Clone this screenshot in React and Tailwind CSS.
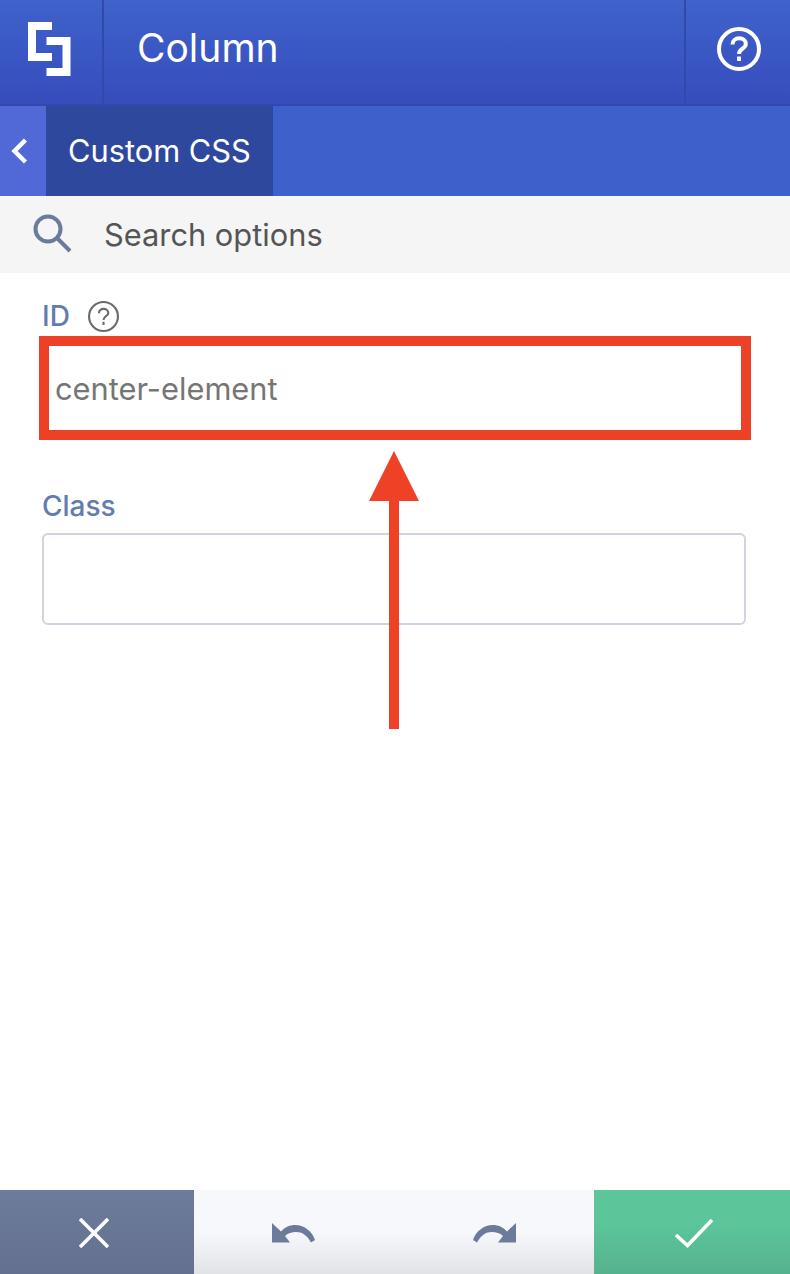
function Logo() {
  return (
    <svg width="44" height="56" viewBox="0 0 44 56" fill="#fff">
      <path d="M0 0H24V8H8V31H24V39H0Z" />
      <path d="M42.5 15V54H18.5V46H34.5V23H18.5V15Z" />
    </svg>
  );
}

function HelpIcon({ size, stroke, color }) {
  return (
    <svg width={size} height={size} viewBox="0 0 44 44" fill="none" stroke={color} strokeWidth={stroke}>
      <circle cx="22" cy="22" r={22 - stroke / 2} />
      <path d="M15.5 17.5c0-3.8 3-6.3 6.7-6.3s6.6 2.4 6.6 5.7c0 4.8-6.8 4.6-6.8 10" />
      <path d="M22 29.5v4.5" />
    </svg>
  );
}

function Undo({ flip }) {
  return (
    <svg width="43" height="20" viewBox="0 0 43 20" fill="#6c7a9c" className={flip ? "-scale-x-100" : ""}>
      <path d="M0 0L9 8.5C13 4 18 2 23 2C32 2 40 8 43 17L39 19.5C35 12 30 9 24 9C20 9 16 10 13 13L18 19.5H0Z" />
    </svg>
  );
}

export default function App() {
  return (
    <div className="relative flex h-[1274px] w-[790px] flex-col overflow-hidden bg-white font-['Inter',sans-serif]">
      <header className="flex h-[106px] shrink-0 border-b-2 border-[#2f49ad] bg-gradient-to-b from-[#3f62cb] to-[#364dbb]">
        <div className="flex w-[104px] items-center justify-start border-r-2 border-[#2f49ad] pl-[28px]">
          <div className="mb-[4px]">
            <Logo />
          </div>
        </div>
        <h1 className="mb-[8px] flex flex-1 items-center pl-[33px] text-[39px] font-normal text-white">Column</h1>
        <div className="flex w-[106px] items-center justify-center border-l-2 border-[#2f49ad] pb-[6px] pl-[2px]">
          <HelpIcon size={44} stroke={4} color="#fff" />
        </div>
      </header>

      <nav className="flex h-[90px] shrink-0 bg-[#3e60ca]">
        <div className="flex w-[46px] items-center justify-start bg-[#5069d6] pl-[11px]">
          <svg width="17" height="26" viewBox="0 0 17 26" fill="none" stroke="#fff" strokeWidth="4.5">
            <path d="M14.5 2L3.5 13L14.5 24" />
          </svg>
        </div>
        <div className="flex w-[227px] items-center bg-[#2e489e] pl-[22px] text-[30.8px] text-white">Custom CSS</div>
      </nav>

      <div className="flex h-[77px] shrink-0 items-center bg-[#f5f5f5] pl-[33px] text-[#555555]">
        <svg width="39" height="39" viewBox="0 0 39 39" fill="none" stroke="#6c7a9c" strokeWidth="4" className="mb-[2px]">
          <circle cx="15" cy="15" r="12.5" />
          <path d="M24 24L37 37" />
        </svg>
        <span className="ml-[32px] pt-[2px] text-[30.8px]">Search options</span>
      </div>

      <main className="flex-1 pl-[42px] pr-[44px]">
        <div className="mt-[24px] flex h-[38px] items-center">
          <span className="text-[28px] font-medium leading-none text-[#627cb0]">ID</span>
          <span className="ml-[18px]">
            <HelpIcon size={31} stroke={3} color="#6b6b6b" />
          </span>
        </div>
        <div className="-ml-[3px] -mr-[5px] mt-[1px] flex h-[104px] items-center border-[10px] border-[#ec4027] pl-[6px] pt-[3px] text-[30.8px] text-[#757575]">
          center-element
        </div>
        <div className="mt-[46px] text-[28px] font-medium leading-[40px] text-[#627cb0]">Class</div>
        <div className="mt-[7px] h-[92px] rounded-[6px] border-2 border-[#d2d2e0] bg-white" />
      </main>

      <footer className="flex h-[84px] shrink-0">
        <div className="flex w-[194px] items-center justify-center bg-gradient-to-b from-[#6e7c9b] to-[#63708f] pr-[6px] pt-[2px]">
          <svg width="30" height="30" viewBox="0 0 30 30" fill="none" stroke="#fff" strokeWidth="3.6">
            <path d="M1 1L29 29M29 1L1 29" />
          </svg>
        </div>
        <div className="flex flex-1 items-center justify-between bg-gradient-to-b from-[#f7f8fc] from-50% to-[#e2e3e7] px-[78px] pt-[2px]">
          <Undo />
          <Undo flip />
        </div>
        <div className="flex w-[196px] items-center justify-center bg-gradient-to-b from-[#5bc69a] from-40% to-[#56b28e] pl-[4px] pt-[2px]">
          <svg width="38" height="29" viewBox="0 0 38 29" fill="none" stroke="#fff" strokeWidth="3.6">
            <path d="M1 16L12.5 26.5L37 1" />
          </svg>
        </div>
      </footer>

      {/* annotation arrow over the form */}
      <svg width="50" height="278" viewBox="0 0 50 278" fill="#ee4126" className="absolute left-[369px] top-[451px]">
        <path d="M25 0L50 50H30V278H20V50H0Z" />
      </svg>
    </div>
  );
}
